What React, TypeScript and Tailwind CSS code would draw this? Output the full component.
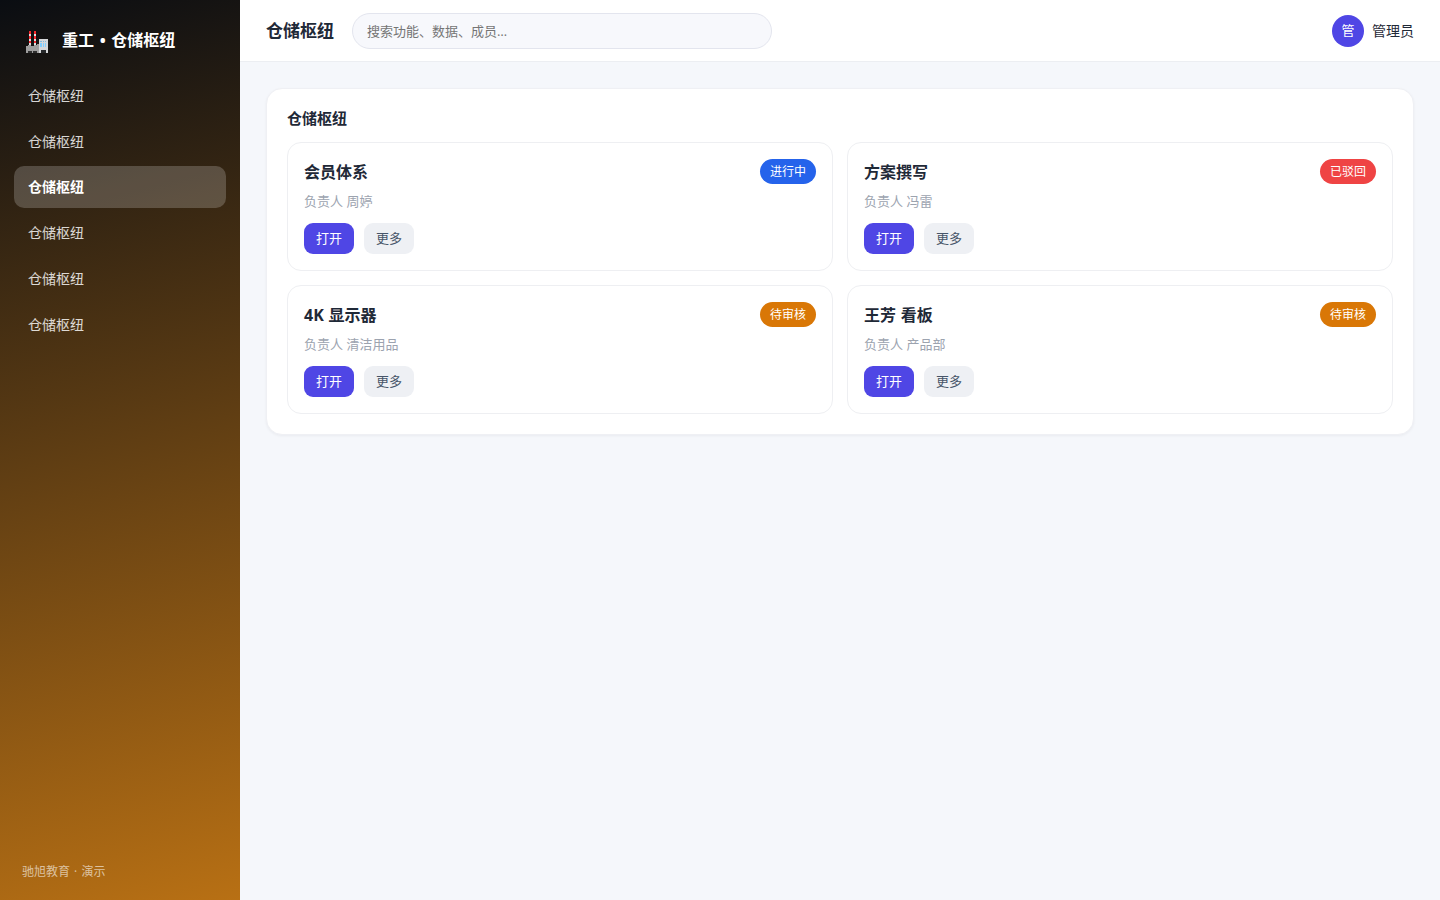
const navItems = ["仓储枢纽", "仓储枢纽", "仓储枢纽", "仓储枢纽", "仓储枢纽", "仓储枢纽"]
const activeIndex = 2

const cards = [
  { title: "会员体系", owner: "周婷", status: "进行中", color: "bg-[#2563eb]" },
  { title: "方案撰写", owner: "冯雷", status: "已驳回", color: "bg-[#ef4444]" },
  { title: "4K 显示器", owner: "清洁用品", status: "待审核", color: "bg-[#d97706]" },
  { title: "王芳 看板", owner: "产品部", status: "待审核", color: "bg-[#d97706]" },
]

function FactoryIcon() {
  return (
    <svg className="mt-[3px]" width="22" height="22" viewBox="0 0 22 22" shapeRendering="crispEdges">
      {/* Chimneys */}
      <path d="M3 0h2v15H3zM8 0h2v15H8z" fill="#e0e0e0" />
      <path d="M3 0h2v3H3zM8 0h2v3H8zM3 5h2v3H3zM8 5h2v3H8zM3 10h2v2H3zM8 10h2v2H8z" fill="#f5292e" />
      {/* Workshop */}
      <path d="M0 15h2v-1h3v1h3v-1h3v-1h2v9H0z" fill="#9e9e9e" />
      <path d="M2 20h4v2H2zM7 20h4v2H7z" fill="#2f2f2f" />
      {/* Office */}
      <path d="M13 8h9v14h-9z" fill="#d6d8da" />
      <path d="M14 10h2v1h-2zM17 10h1v1h-1zM19 10h1v1h-1z" fill="#82b9dc" />
      <path d="M14 12h2v4h-2zM17 12h1v4h-1zM19 12h1v4h-1z" fill="#82cfff" />
      <path d="M15 19h5v3h-5z" fill="#26282a" />
    </svg>
  )
}

export default function App() {
  return (
    <div className="flex h-screen w-full overflow-hidden bg-[#f5f7fb] font-['Open_Sans','Noto_Sans_CJK_SC',sans-serif] text-sm leading-[1.55] text-[#1f2937]">
      {/* Sidebar */}
      <aside className="flex w-60 shrink-0 flex-col bg-[linear-gradient(165deg,#0a0d12,#b87014)] px-3.5 pt-5 pb-[18px] text-white">
        <div className="mb-[14.8px] flex h-10 items-center gap-3.5 pl-3">
          <FactoryIcon />
          <span className="pb-px text-base leading-6 font-bold whitespace-nowrap [word-spacing:1.5px]">
            重工 • 仓储枢纽
          </span>
        </div>
        <nav className="flex flex-col gap-[4.6px]">
          {navItems.map((label, i) => (
            <a
              key={i}
              className={`block rounded-[10px] px-3.5 pt-2.5 pb-[9.5px] leading-[21.75px] ${i === activeIndex ? "bg-white/20 font-bold text-white" : "text-white/82"}`}
            >
              {label}
            </a>
          ))}
        </nav>
        <div className="mt-auto pl-2 text-xs leading-[1.55] text-white/60 [word-spacing:1px]">驰旭教育 · 演示</div>
      </aside>

      <div className="flex min-w-0 flex-1 flex-col">
        {/* Top bar */}
        <header className="flex h-[62px] shrink-0 items-center gap-[18px] border-b border-[#eceef2] bg-white px-[26px]">
          <h1 className="pt-0.5 text-[17px] font-bold">仓储枢纽</h1>
          <input
            className="h-9 w-[420px] rounded-full border border-[#e3e5ee] bg-[#f7f8fc] px-3.5 text-[13px] placeholder:text-[#757575]"
            placeholder="搜索功能、数据、成员…"
          />
          <div className="ml-auto flex items-center gap-2">
            <div className="flex size-8 items-center justify-center rounded-full bg-[#4f46e5] text-[13px] text-white">管</div>
            <span className="pt-px">管理员</span>
          </div>
        </header>

        <main className="p-[26px]">
          <section className="rounded-2xl border border-[#eff0f4] bg-white p-5 shadow-[0_1px_3px_rgba(16,24,40,0.05)]">
            <h2 className="mb-3.5 text-[15px] leading-[19px] font-bold">仓储枢纽</h2>
            <div className="grid grid-cols-2 gap-3.5">
              {cards.map((card) => (
                <article key={card.title} className="h-[129px] rounded-[14px] border border-[#eeeff2] p-4">
                  <div className="flex h-[25px] items-center justify-between">
                    <h3 className="pt-px text-base leading-[26px] font-bold [word-spacing:0.5px]">{card.title}</h3>
                    <span className={`h-[25px] rounded-full px-2.5 text-xs leading-[25px] text-white ${card.color}`}>
                      {card.status}
                    </span>
                  </div>
                  <p className="mt-[7px] text-[13px] leading-5 text-[#9ca3af]">负责人 {card.owner}</p>
                  <div className="mt-3 flex gap-2.5">
                    <button className="h-[31px] rounded-[9px] bg-[#4f46e5] px-3 pb-px text-[13px] text-white">打开</button>
                    <button className="h-[31px] rounded-[9px] bg-[#eef0f4] px-3 pb-px text-[13px] text-[#475569]">更多</button>
                  </div>
                </article>
              ))}
            </div>
          </section>
        </main>
      </div>
    </div>
  )
}
